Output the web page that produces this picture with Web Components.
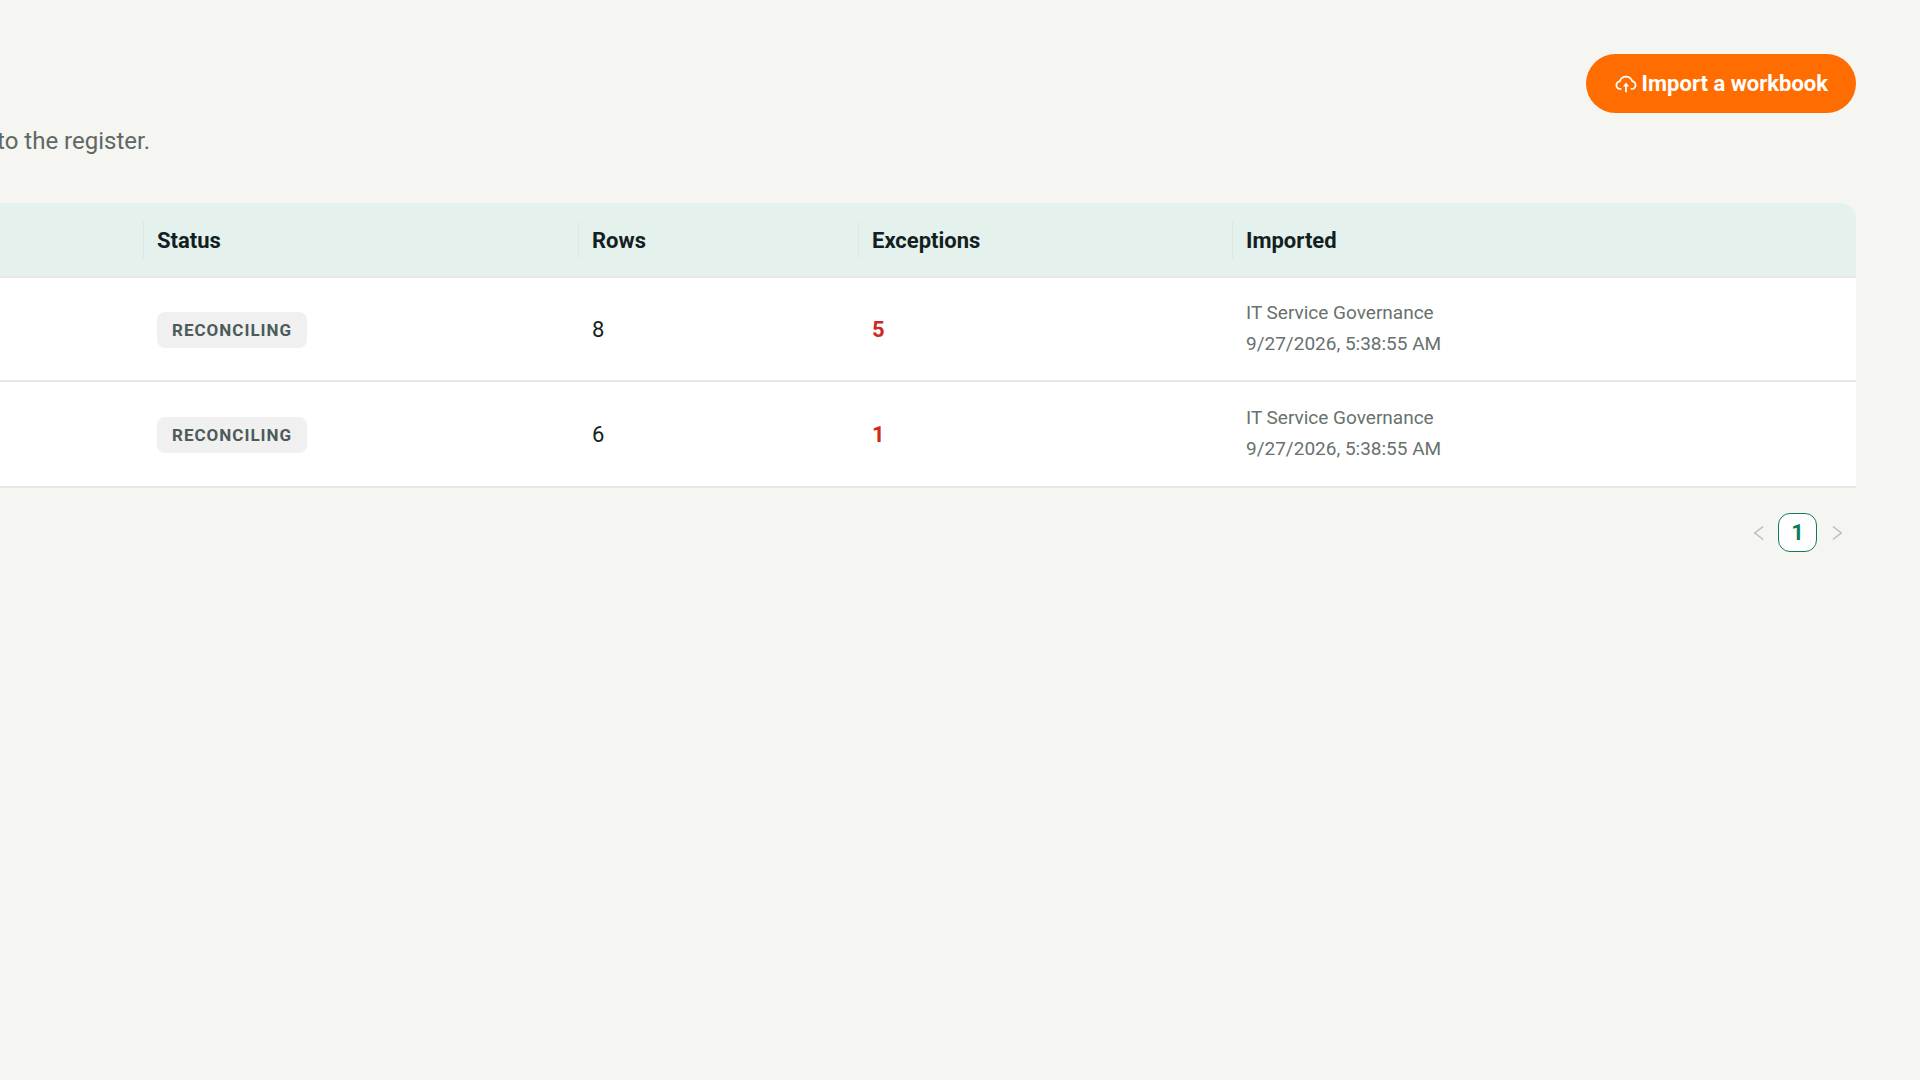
<!DOCTYPE html>
<html lang="en">
<head>
<meta charset="utf-8">
<title>Workbook imports</title>
<style>
  html, body { margin: 0; }
  body {
    min-height: 100vh;
    background: #f5f5f2;
    color: #141f22;
    font: 22px/32px Roboto, "Open Sans", sans-serif;
    overflow-x: hidden;
  }
</style>
</head>
<body>
<import-page>
  <import-button slot="action">Import a workbook</import-button>
  <span slot="description">to the register.</span>
  <import-table slot="content"></import-table>
  <page-switch slot="content"></page-switch>
</import-page>

<script>
class ImportPage extends HTMLElement {
  constructor() {
    super();
    this.attachShadow({ mode: 'open' }).innerHTML = `
      <style>
        :host { display: block; }
        main { display: flex; flex-direction: column; padding: 54px 64px 0 0; }
        header { display: flex; flex-direction: column; margin-bottom: 44px; }
        .actions { display: flex; justify-content: flex-end; }
        p { display: flex; justify-content: flex-end; overflow: hidden; width: 150px; margin: 10px 0 0; color: #5f6865; font-size: 24px; line-height: 36px; white-space: nowrap; }
      </style>
      <main>
        <header>
          <div class="actions"><slot name="action"></slot></div>
          <p><slot name="description"></slot></p>
        </header>
        <slot name="content"></slot>
      </main>`;
  }
}

class ImportButton extends HTMLElement {
  constructor() {
    super();
    this.attachShadow({ mode: 'open' }).innerHTML = `
      <style>
        :host { display: block; }
        button { display: flex; align-items: center; gap: 4px; height: 59px; padding: 0 28px; border: 0; border-radius: 30px; background: #ff6d00; color: #fff; font: inherit; font-weight: 700; cursor: pointer; }
        svg { width: 24px; height: 24px; }
      </style>
      <button type="button">
        <svg viewBox="0 0 1024 1024" fill="currentColor" aria-hidden="true">
          <path d="M518.3 459a8 8 0 00-12.6 0l-112 141.7a7.98 7.98 0 006.3 12.9h73.9V856c0 4.4 3.6 8 8 8h60c4.4 0 8-3.6 8-8V613.7H624c6.7 0 10.4-7.7 6.3-12.9L518.3 459z"/>
          <path d="M811.4 366.7C765.6 245.9 648.9 160 512.2 160S258.8 245.8 213 366.6C127.3 389.1 64 467.2 64 560c0 110.5 89.5 200 199.9 200H304c4.4 0 8-3.6 8-8v-60c0-4.4-3.6-8-8-8h-40.1c-33.7 0-65.4-13.4-89-37.7-23.5-24.2-36-56.8-34.9-90.6.9-26.4 9.9-51.2 26.2-72.1 16.7-21.3 40.1-36.8 66.1-43.7l37.9-9.9 13.9-36.6c8.6-22.8 20.6-44.1 35.7-63.4a245.6 245.6 0 0152.4-49.9c41.1-28.9 89.5-44.2 140-44.2s98.9 15.3 140 44.2c19.9 14 37.5 30.8 52.4 49.9 15.1 19.3 27.1 40.7 35.7 63.4l13.8 36.5 37.8 10C846.1 454.5 884 503.8 884 560c0 33.1-12.9 64.3-36.3 87.7a123.07 123.07 0 01-87.6 36.3H720c-4.4 0-8 3.6-8 8v60c0 4.4 3.6 8 8 8h40.1C870.5 760 960 670.5 960 560c0-92.7-63.1-170.7-148.6-193.3z"/>
        </svg>
        <slot></slot>
      </button>`;
  }
}

class StatusTag extends HTMLElement {
  constructor() {
    super();
    this.attachShadow({ mode: 'open' }).innerHTML = `
      <style>
        :host { display: inline-block; vertical-align: middle; padding: 0 15px; border-radius: 8px; background: #f0f0f0; color: #4d5b5b; font-size: 17px; line-height: 36px; font-weight: 700; letter-spacing: 1px; }
      </style>
      <slot></slot>`;
  }
}

class ImportTable extends HTMLElement {
  constructor() {
    super();
    const rows = [[8, 5], [6, 1]].map(([count, exceptions]) => `
      <tr>
        <td></td>
        <td><status-tag>RECONCILING</status-tag></td>
        <td>${count}</td>
        <td class="exceptions">${exceptions}</td>
        <td class="imported"><div>IT Service Governance</div><div>9/27/2026, 5:38:55 AM</div></td>
      </tr>`).join('');
    this.attachShadow({ mode: 'open' }).innerHTML = `
      <style>
        :host { display: block; }
        table { width: 100%; table-layout: fixed; border-collapse: separate; border-spacing: 0; }
        col.name { width: 144px; }
        col.status { width: 435px; }
        col.rows { width: 280px; }
        col.exceptions { width: 374px; }
        th, td { box-sizing: border-box; padding: 2px 13px 0; border-bottom: 2px solid #e6e8e8; text-align: left; }
        th { height: 75px; background: linear-gradient(#dce8e5, #dce8e5) right center / 1px 38px no-repeat #e4f1ed; font-weight: 700; }
        th:last-child { background: #e4f1ed; border-top-right-radius: 16px; }
        td { height: 104px; background: #fff; }
        tbody tr:last-child td { height: 106px; }
        td.exceptions { color: #cf2a20; font-weight: 700; }
        td.imported { padding-top: 0; padding-bottom: 2px; color: #68716e; font-size: 19px; line-height: 31px; }
      </style>
      <table>
        <colgroup><col class="name"><col class="status"><col class="rows"><col class="exceptions"><col></colgroup>
        <thead><tr><th></th><th>Status</th><th>Rows</th><th>Exceptions</th><th>Imported</th></tr></thead>
        <tbody>${rows}</tbody>
      </table>`;
  }
}

class PageSwitch extends HTMLElement {
  constructor() {
    super();
    this.attachShadow({ mode: 'open' }).innerHTML = `
      <style>
        :host { display: block; margin-top: 25px; }
        nav { display: flex; justify-content: flex-end; }
        button { display: flex; align-items: center; justify-content: center; box-sizing: border-box; width: 39px; height: 39px; padding: 0; border: 0; border-radius: 12px; background: none; color: #bfc1be; font: inherit; }
        button[aria-current] { border: 1px solid #0f7a60; background: #fff; color: #0f7a60; font-weight: 700; }
        svg { width: 20px; height: 20px; }
      </style>
      <nav aria-label="Pages">
        <button type="button" disabled aria-label="Previous page"><svg viewBox="0 0 1024 1024" fill="currentColor"><path d="M724 218.3V141c0-6.7-7.7-10.4-12.9-6.3L260.3 486.8a31.86 31.86 0 000 50.3l450.8 352.1c5.3 4.1 12.9.4 12.9-6.3v-77.3c0-4.9-2.3-9.6-6.1-12.6l-360-281 360-281.1c3.8-3 6.1-7.7 6.1-12.6z"/></svg></button>
        <button type="button" aria-current="page">1</button>
        <button type="button" disabled aria-label="Next page"><svg viewBox="0 0 1024 1024" fill="currentColor"><path d="M765.7 486.8L314.9 134.7A7.97 7.97 0 00302 141v77.3c0 4.9 2.3 9.6 6.1 12.6l360 281.1-360 281.1c-3.9 3-6.1 7.7-6.1 12.6V883c0 6.7 7.7 10.4 12.9 6.3l450.8-352.1a31.96 31.96 0 000-50.4z"/></svg></button>
      </nav>`;
  }
}

customElements.define('status-tag', StatusTag);
customElements.define('import-page', ImportPage);
customElements.define('import-button', ImportButton);
customElements.define('import-table', ImportTable);
customElements.define('page-switch', PageSwitch);
</script>
</body>
</html>
